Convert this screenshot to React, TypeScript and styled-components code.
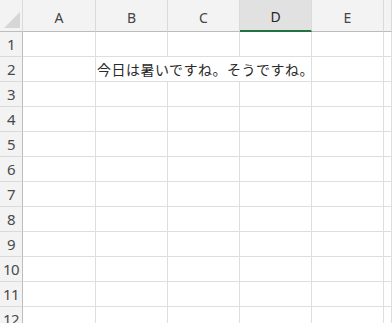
import React from 'react';
import styled, { createGlobalStyle } from 'styled-components';

const GlobalStyle = createGlobalStyle`
  html, body {
    margin: 0;
    padding: 0;
    background: #ffffff;
    overflow: hidden;
  }
`;

const columns = ['A', 'B', 'C', 'D', 'E', ''];
const selectedColumn = 'D';
const rowCount = 12;

const Sheet = styled.div`
  display: grid;
  grid-template-columns: 23px 73px repeat(4, 72px) 1fr;
  grid-template-rows: 32px repeat(${rowCount}, 25px);
  width: 392px;
  height: 323px;
  overflow: hidden;
  font-family: 'Noto Sans', 'Noto Sans CJK JP', sans-serif;
`;

const Corner = styled.div`
  display: flex;
  align-items: flex-end;
  justify-content: flex-end;
  background: #f3f3f3;
  border-right: 1px solid #dadada;
  border-bottom: 1px solid #bdbdbd;
  box-sizing: border-box;
  padding: 0 2px 3px 0;
`;

const ColHeader = styled.div<{ $selected?: boolean }>`
  display: flex;
  align-items: center;
  justify-content: center;
  padding-top: 3px;
  box-sizing: border-box;
  background: ${(p) => (p.$selected ? '#e1e1e1' : '#f3f3f3')};
  border-right: 1px solid #dadada;
  border-bottom: ${(p) => (p.$selected ? '2px solid #217346' : '1px solid #bdbdbd')};
  color: ${(p) => (p.$selected ? '#262626' : '#444444')};
  font-size: 14px;
`;

const RowHeader = styled.div`
  display: flex;
  align-items: center;
  justify-content: center;
  box-sizing: border-box;
  background: #f3f3f3;
  border-right: 1px solid #bdbdbd;
  border-bottom: 1px solid #dadada;
  color: #4a4a4a;
  font-size: 15px;
  letter-spacing: -0.5px;
`;

const Cell = styled.div<{ $span?: number }>`
  grid-column: span ${(p) => p.$span ?? 1};
  display: flex;
  align-items: center;
  box-sizing: border-box;
  border-right: 1px solid #dedede;
  border-bottom: 1px solid #dedede;
  padding-left: 1px;
  white-space: nowrap;
  color: #2a2a2a;
  font-family: 'Noto Sans CJK JP', sans-serif;
  font-size: 14px;
  letter-spacing: 0.5px;
`;

const SelectAll = () => (
  <svg width="16" height="16" viewBox="0 0 16 16">
    <polygon points="16,0 16,16 0,16" fill="#d6d6d6" />
  </svg>
);

const renderRow = (row: number) => {
  const cells: React.ReactNode[] = [<RowHeader key="h">{row}</RowHeader>];
  if (row === 2) {
    cells.push(<Cell key="A" />);
    cells.push(
      <Cell key="B" $span={3}>
        今日は暑いですね。そうですね。
      </Cell>
    );
    cells.push(<Cell key="E" />);
    cells.push(<Cell key="F" />);
  } else {
    columns.forEach((c) => cells.push(<Cell key={c || 'F'} />));
  }
  return cells;
};

export default function App() {
  return (
    <>
      <GlobalStyle />
      <Sheet>
        <Corner>
          <SelectAll />
        </Corner>
        {columns.map((c) => (
          <ColHeader key={c || 'F'} $selected={c === selectedColumn}>
            {c}
          </ColHeader>
        ))}
        {Array.from({ length: rowCount }, (_, i) => renderRow(i + 1))}
      </Sheet>
    </>
  );
}
